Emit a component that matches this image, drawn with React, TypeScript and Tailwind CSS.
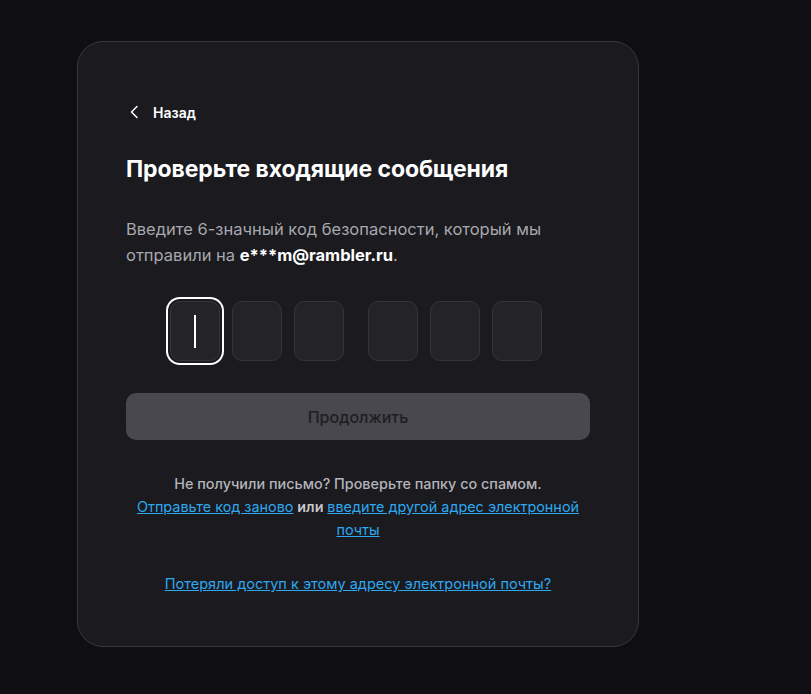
import React from 'react';

const OtpBox: React.FC<{ focused?: boolean }> = ({ focused }) => (
  <div
    className={
      'w-[50px] h-[60px] rounded-[10px] bg-[#232328] border border-[#34343a] flex items-center justify-center ' +
      (focused ? 'ring-2 ring-white ring-offset-2 ring-offset-[#1a1a1f]' : '')
    }
  >
    {focused && <div className="w-[2px] h-[33px] bg-white" />}
  </div>
);

const App: React.FC = () => {
  return (
    <div className="w-full min-h-[694px] bg-[#0f0f13] pt-[41px] pl-[77px] font-['Inter',sans-serif]">
      <div className="w-[562px] h-[606px] bg-[#1a1a1f] border border-[#36363c] rounded-[26px] px-[48px] pt-[58px]">
        <button className="flex items-center gap-[11px] h-[24px] text-white text-[14px] font-semibold">
          <svg width="14" height="14" viewBox="0 0 14 14" fill="none" className="ml-[2px]">
            <path d="M9 1.5L3.5 7L9 12.5" stroke="white" strokeWidth="1.5" strokeLinecap="round" strokeLinejoin="round" />
          </svg>
          Назад
        </button>

        <h1 className="mt-[30px] text-white text-[23px] leading-[30px] font-bold tracking-[-0.1px]">
          Проверьте входящие сообщения
        </h1>

        <p className="mt-[32px] text-[#a8a8ae] text-[16.5px] leading-[26px]">
          Введите 6-значный код безопасности, который мы отправили на{' '}
          <span className="text-white font-bold">e***m@rambler.ru</span>.
        </p>

        <div className="mt-[33px] flex justify-center pr-[4px]">
          <div className="flex gap-[12px]">
            <OtpBox focused />
            <OtpBox />
            <OtpBox />
          </div>
          <div className="flex gap-[12px] ml-[24px]">
            <OtpBox />
            <OtpBox />
            <OtpBox />
          </div>
        </div>

        <button className="mt-[32px] w-full h-[47px] rounded-[10px] bg-[#48484e] text-[#1e1e22] text-[16px] font-medium">
          Продолжить
        </button>

        <div className="mt-[32px] text-center text-[14.4px] leading-[23px] font-medium text-[#b4b4ba]">
          <p>Не получили письмо? Проверьте папку со спамом.</p>
          <p>
            <a className="text-[#2ea8ee] underline font-normal">Отправьте код заново</a>{' '}
            <span className="text-[#c8c8cc] font-semibold">или</span>{' '}
            <a className="text-[#2ea8ee] underline font-normal">введите другой адрес электронной почты</a>
          </p>
        </div>

        <div className="mt-[31px] text-center text-[14.5px] leading-[23px]">
          <a className="text-[#2ea8ee] underline">Потеряли доступ к этому адресу электронной почты?</a>
        </div>
      </div>
    </div>
  );
};

export default App;
